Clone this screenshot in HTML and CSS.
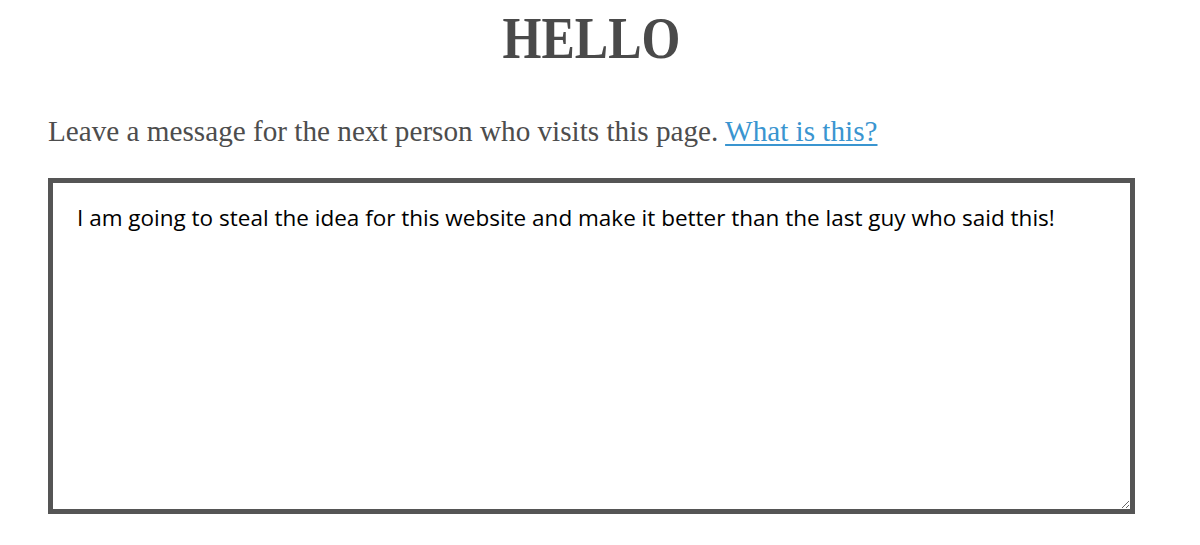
FILE: index.html
```html
<!DOCTYPE html>
<html>
<head>
<meta charset="utf-8">
<link rel="stylesheet" href="styles.css">
</head>
<body>
<main class="page">
  <h1 class="title">HELLO</h1>
  <p class="intro">Leave a message for the next person who visits this page. <a href="#" class="link">What is this?</a></p>
  <textarea class="message">I am going to steal the idea for this website and make it better than the last guy who said this!</textarea>
</main>
</body>
</html>
```
FILE: styles.css
```css
html, body {
  margin: 0;
  padding: 0;
  background: #ffffff;
}
.page {
  width: 1087px;
  margin-left: 48px;
  display: flex;
  flex-direction: column;
}
.title {
  margin: 6px 0 0 0;
  text-align: center;
  font-family: "Liberation Serif", serif;
  font-weight: bold;
  font-size: 50px;
  line-height: 64px;
  letter-spacing: 0;
  color: #4a4a4a;
  transform: scaleY(1.2);
}
.intro {
  margin: 43px 0 0 0;
  font-family: "Liberation Serif", serif;
  font-size: 29.2px;
  line-height: 36px;
  color: #4d4d4d;
}
.link {
  color: #3a95d0;
  text-decoration: underline;
  text-underline-offset: 3px;
}
.message {
  margin-top: 29px;
  box-sizing: border-box;
  width: 1087px;
  height: 336px;
  border: 5px solid #555555;
  padding: 20px 24px;
  font-family: "Open Sans", sans-serif;
  font-size: 22.5px;
  line-height: 30px;
  color: #000;
  resize: vertical;
  outline: none;
}
```
